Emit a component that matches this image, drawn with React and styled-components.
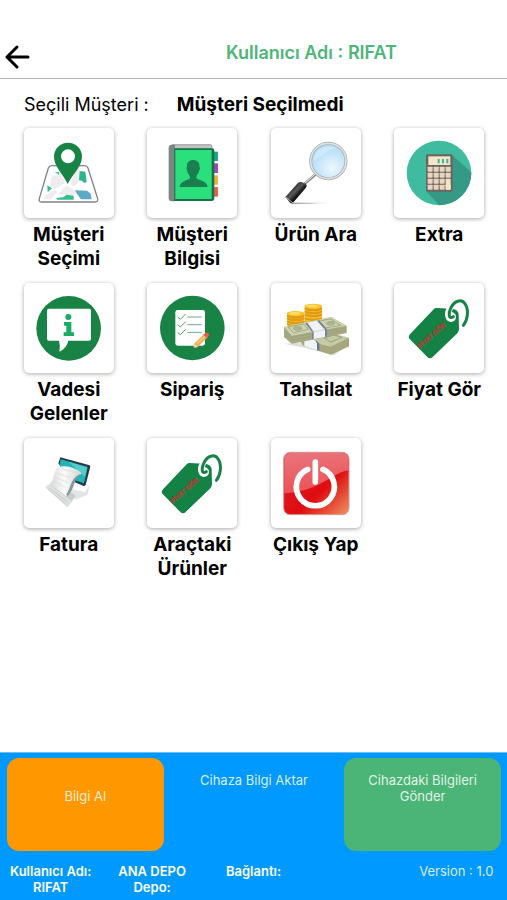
import styled, { createGlobalStyle } from "styled-components";

const GlobalStyle = createGlobalStyle`
  * {
    box-sizing: border-box;
  }
  body {
    margin: 0;
    background-color: white;
    color: black;
    font-family: Inter, "Liberation Sans", sans-serif;
  }
  button {
    border: none;
    padding: 0;
    background: none;
    color: inherit;
    font-family: inherit;
    cursor: pointer;
  }
`;

const Page = styled.div`
  min-height: 100vh;
  display: flex;
  flex-direction: column;
`;
const Header = styled.header`
  display: flex;
  align-items: center;
  padding-top: 36px;
  border-bottom: 1px solid #b4b4b4;
`;
const BackButton = styled.button`
  width: 116px;
  height: 42px;
  padding-left: 4px;
  display: flex;
  align-items: center;
`;
const Title = styled.h1`
  flex: 1;
  margin: 0;
  padding-bottom: 8px;
  text-align: center;
  color: #4db679;
  font-size: 18px;
  line-height: 24px;
  font-weight: 600;
`;
const Main = styled.main`
  flex: 1;
`;
const Customer = styled.p`
  display: flex;
  align-items: baseline;
  gap: 28px;
  margin: 0;
  padding: 14px 24px 11px;
  font-size: 18px;
  line-height: 24px;
  strong {
    font-size: 19px;
    font-weight: 700;
  }
`;
const Menu = styled.nav`
  display: grid;
  grid-template-columns: repeat(4, 1fr);
  row-gap: 12px;
  padding: 0 6px 0 7px;
`;
const MenuButton = styled.button`
  display: flex;
  flex-direction: column;
  align-items: center;
  gap: 5px;
  min-height: 143px;
`;
const Card = styled.span`
  display: block;
  width: 90px;
  height: 90px;
  border-radius: 5px;
  background-color: white;
  box-shadow: 0 1px 4px rgba(0, 0, 0, 0.34);
  svg {
    display: block;
    width: 100%;
    height: 100%;
  }
`;
const Label = styled.span`
  max-width: 100px;
  font-size: 19px;
  line-height: 24px;
  font-weight: 700;
`;
const Footer = styled.footer`
  background-color: #0099ff;
  color: white;
  border-top: 1px solid #66c2ff;
  padding-bottom: 5px;
`;
const Actions = styled.div`
  display: grid;
  grid-template-columns: repeat(3, 1fr);
  gap: 12px;
  padding: 5px 6px 12px 7px;
`;
const Action = styled.button`
  display: flex;
  justify-content: center;
  align-items: flex-start;
  min-height: 93px;
  padding: ${(props) => (props.$low ? "30px" : "14px")} 20px 0;
  border-radius: 12px;
  background-color: ${(props) => props.$color || "transparent"};
  color: rgba(255, 255, 255, 0.85);
  font-size: 13px;
  line-height: 16px;
`;
const Info = styled.div`
  display: grid;
  grid-template-columns: repeat(5, 1fr);
  text-align: center;
  font-size: 13px;
  line-height: 16px;
  font-weight: 600;
`;
const InfoItem = styled.span`
  padding: 0 6px;
`;
const Version = styled.span`
  grid-column: 5;
  font-weight: 400;
  color: rgba(255, 255, 255, 0.85);
`;

const BackIcon = () => (
  <svg width="26" height="26" viewBox="0 0 26 26" fill="none" aria-hidden="true">
    <path
      d="M24 13H3M13 3L3 13L13 23"
      stroke="black"
      strokeWidth="3"
      strokeLinecap="round"
      strokeLinejoin="round"
    />
  </svg>
);

const MapIcon = () => (
  <svg viewBox="27 22 270 270" aria-hidden="true">
    <path
      d="M110 135H208Q216 135 219 142L248 234Q250 244 240 244H80Q70 244 73 234L100 142Q103 135 110 135Z"
      fill="#fff"
      stroke="#818386"
      strokeWidth="4"
    />
    <path d="M110 168L138 160L150 188L120 205L104 196ZM128 222L155 194L188 216L172 224ZM184 142H193L192 184L176 198L166 190ZM92 222L120 208L128 214L108 236H86Z" fill="#efecef" />
    <path d="M194 151L211 153L215 185L206 186L201 180L192 179Z" fill="#2cb68c" />
    <path d="M97 194L111 203L98 215ZM120 154L133 155L132 163ZM124 232L144 230L155 222L176 225V237H126Z" fill="#36bd91" />
    <path d="M180 209L216 210L227 219L230 236H198L187 221Z" fill="#5aa9c7" />
    <path
      fillRule="evenodd"
      d="M158 190C146 162 117 138 117 108A42 42 0 1 1 201 108C201 138 171 162 158 190ZM159 86A21 21 0 1 0 159 128A21 21 0 1 0 159 86Z"
      fill="#178345"
    />
  </svg>
);

const ContactsIcon = () => (
  <svg viewBox="22 22 270 270" aria-hidden="true">
    <rect x="218" y="93" width="17" height="28" fill="#1ba58a" />
    <rect x="218" y="128" width="17" height="29" fill="#9c4cae" />
    <rect x="218" y="164" width="17" height="28" fill="#f0ae42" />
    <rect x="218" y="199" width="17" height="29" fill="#ef6047" />
    <path d="M98 72H212Q217 72 217 78V90H98Z" fill="#bfc3c2" stroke="#767c7b" strokeWidth="2" />
    <path d="M97 72H106V242H96Q87 242 87 232V82Q87 72 97 72Z" fill="#7d8582" />
    <path d="M104 83H218Q224 83 224 90V232Q224 241 216 241H104Z" fill="#16724b" />
    <path d="M107 88H216V235H107Z" fill="#2bdf7d" />
    <path
      d="M120 199C122 183 136 181 149 175Q153 172 149 164Q143 157 142 148Q138 143 142 137C139 112 182 112 179 137Q184 143 179 148Q178 157 171 164Q168 172 173 175C187 181 202 183 204 199Z"
      fill="#197f4e"
    />
  </svg>
);

const SearchIcon = () => (
  <svg viewBox="32 22 270 270" aria-hidden="true">
    <defs>
      <radialGradient id="lens" cx="60%" cy="70%" r="75%">
        <stop offset="0" stopColor="#edf8ff" />
        <stop offset="1" stopColor="#a5d5f4" />
      </radialGradient>
      <linearGradient id="handle" x1="0" y1="0" x2="1" y2="1">
        <stop offset="0.25" stopColor="#222" />
        <stop offset="0.45" stopColor="#5a5a5a" />
        <stop offset="0.6" stopColor="#151515" />
      </linearGradient>
      <linearGradient id="ground">
        <stop offset="0" stopColor="#777" />
        <stop offset="1" stopColor="#fff" />
      </linearGradient>
    </defs>
    <path d="M92 246L220 246L150 249H94Z" fill="url(#ground)" />
    <path d="M132 190L168 159" stroke="#858585" strokeWidth="8" />
    <path d="M133 188L167 158" stroke="#eee" strokeWidth="3" />
    <path d="M75 229L112 188Q116 183 124 184L136 189Q142 194 136 202L97 248L89 246Z" fill="url(#handle)" />
    <path d="M76 229L98 247" stroke="#aaa" strokeWidth="3" />
    <circle cx="204" cy="121" r="53" fill="url(#lens)" stroke="#a4aaab" strokeWidth="9" />
    <circle cx="204" cy="121" r="53" fill="none" stroke="#dde1e1" strokeWidth="5" />
    <path d="M160 119A44 44 0 0 1 231 86Q214 82 195 97Q176 111 160 119Z" fill="#fff" opacity="0.3" />
  </svg>
);

const keys = [0, 1, 2, 3].flatMap((row) => [0, 1, 2, 3].map((col) => ({ row, col })));

const CalculatorIcon = () => (
  <svg viewBox="27 22 270 270" aria-hidden="true">
    <defs>
      <clipPath id="disc">
        <circle cx="162" cy="157" r="97" />
      </clipPath>
    </defs>
    <circle cx="162" cy="157" r="97" fill="#3fbba0" />
    <path d="M202 104L280 174V270H178L124 212Z" fill="#369985" clipPath="url(#disc)" />
    <rect x="123" y="101" width="80" height="112" rx="4" fill="#6b6464" />
    <rect x="130" y="107" width="66" height="26" fill="#f6e6c6" />
    <path d="M161 115V128M174 115V128M187 115V128" stroke="#3eb49a" strokeWidth="6" />
    {keys.map(({ row, col }) => (
      <rect
        key={`${row}-${col}`}
        x={128 + col * 18}
        y={138 + row * 18}
        width="15"
        height={col === 3 && row === 2 ? 33 : 15}
        rx="2"
        fill={col === 3 && row > 1 ? "#f6e4be" : "#e9d5bd"}
      />
    ))}
  </svg>
);

const InfoIcon = () => (
  <svg viewBox="27 22 270 270" aria-hidden="true">
    <circle cx="161" cy="158" r="97" fill="#188345" />
    <path d="M102 99H222Q228 99 228 105V189Q228 195 222 195H160Q155 218 133 228Q137 211 132 195H102Q96 195 96 189V105Q96 99 102 99Z" fill="#fff" />
    <circle cx="160" cy="124" r="9" fill="#19ac65" />
    <path d="M147 139H169V170H177V181H146V170H154V150H147Z" fill="#19ac65" />
  </svg>
);

const OrderIcon = () => (
  <svg viewBox="22 22 270 270" aria-hidden="true">
    <circle cx="158" cy="157" r="97" fill="#188345" />
    <rect x="107" y="103" width="89" height="107" rx="7" fill="#fff" />
    <path
      d="M114 124L122 131L138 115M114 147L122 154L138 138M114 170L122 177L138 161"
      fill="none"
      stroke="#4c9c70"
      strokeWidth="3"
    />
    <path d="M143 124H186M143 147H186M143 170H186" stroke="#69ac87" strokeWidth="3" />
    <path d="M160 217L163 204L194 174L205 184L174 214Z" fill="#edb35c" />
    <path d="M171 204L199 179" stroke="#f6cc80" strokeWidth="4" />
    <path d="M191 177L199 171Q205 170 208 175Q210 180 202 187Z" fill="#e9584d" />
    <path d="M160 217L163 204L174 214Z" fill="#f6dfba" />
    <path d="M160 217L161 211L166 215Z" fill="#51545a" />
  </svg>
);

const Coins = ({ x, tops }) =>
  tops.map((y) => (
    <g key={y}>
      <ellipse cx={x} cy={y + 6} rx="27" ry="9" fill="#e09a14" />
      <ellipse cx={x} cy={y} rx="27" ry="8" fill="#f8c52c" />
      <ellipse cx={x - 3} cy={y - 1} rx="16" ry="4" fill="#ffdf68" />
    </g>
  ));

const MoneyIcon = () => (
  <svg viewBox="32 22 270 270" aria-hidden="true">
    <path d="M72 204L132 216L220 239L264 210L190 196Z" fill="#deded9" />
    <Coins x={159} tops={[132, 121, 110, 101, 92]} />
    <Coins x={106} tops={[140, 131, 122, 114]} />
    <path d="M116 192L190 176L266 187V212L212 237L130 211Z" fill="#a6a77f" />
    <path d="M116 190L208 170L266 186L211 213Z" fill="#c6c9a6" />
    <path d="M190 187L221 178L245 185L211 199Z" fill="none" stroke="#9aa27e" strokeWidth="3" />
    <path d="M132 192L154 187L176 206V226L132 211Z" fill="#f1f4f5" />
    <path d="M165 193L177 203V226L170 224V204Z" fill="#657993" />
    <path d="M71 155L213 124L259 151V172L94 204L71 184Z" fill="#a6a983" />
    <path d="M71 153L213 124L259 150L94 180Z" fill="#ced1ad" />
    <path d="M83 154L130 145L144 161L100 171ZM176 136L211 130L241 149L196 157Z" fill="none" stroke="#a3ac87" strokeWidth="3" />
    <ellipse cx="112" cy="158" rx="14" ry="7" fill="#a8b38b" />
    <ellipse cx="211" cy="143" rx="13" ry="7" fill="#a8b38b" />
    <path d="M76 167L94 185L259 156M76 176L94 193L259 164" fill="none" stroke="#8c9270" />
    <path d="M135 143L171 135L194 161V184L155 191V169Z" fill="#eff3f6" />
    <path d="M135 143L141 141L160 168V191L155 191V169ZM170 135L176 134L200 161V183L194 184V162Z" fill="#70849b" />
    <path d="M155 169L194 162" stroke="#bdc5ce" strokeWidth="2" />
  </svg>
);

const TagIcon = () => (
  <svg viewBox="27 22 270 270" aria-hidden="true">
    <path
      d="M154 97L198 99Q221 99 221 119L222 160Q222 167 217 173L143 244Q135 252 127 244L74 190Q68 184 75 176L146 101Q149 97 154 97Z"
      fill="#148245"
    />
    <circle cx="198" cy="124" r="15" fill="#fff" />
    <path
      d="M205 124C189 137 184 115 195 98C208 76 232 68 243 86C252 104 249 133 235 149"
      fill="none"
      stroke="#fff"
      strokeWidth="18"
    />
    <path
      d="M205 123C190 133 190 112 197 98C207 76 230 67 241 86C252 104 248 133 235 149"
      fill="none"
      stroke="#178345"
      strokeWidth="9"
      strokeLinecap="round"
    />
    <text
      x="105"
      y="220"
      transform="rotate(-42 105 220)"
      fill="#b93a32"
      stroke="#b93a32"
      fontFamily="Liberation Sans"
      fontSize="20"
      fontWeight="700"
    >
      FİYAT GÖR
    </text>
  </svg>
);

const InvoiceIcon = () => (
  <svg viewBox="27 22 270 270" aria-hidden="true">
    <defs>
      <linearGradient id="paper">
        <stop offset="0" stopColor="#d7dad8" />
        <stop offset="0.45" stopColor="#fafafa" />
        <stop offset="1" stopColor="#ced5d4" />
      </linearGradient>
    </defs>
    <path d="M158 172L210 184L224 162L218 192L183 207Z" fill="#e4e5e9" />
    <path d="M136 80L224 104Q227 106 225 112L212 163Q209 167 204 165L165 149L130 98Z" fill="#263c44" />
    <path d="M137 86L218 109L207 158L166 144L134 103Z" fill="#24b4b8" />
    <path d="M160 93L216 110L210 138Z" fill="#55cccb" />
    <path d="M95 165L157 228L183 196L125 153Z" fill="#c9cecb" />
    <path d="M91 170L104 162L173 212L157 230Z" fill="#dfe1df" />
    <path d="M102 172L158 214M113 168L165 205M99 177L151 219" stroke="#b9c1be" strokeWidth="2" />
    <path d="M126 113C145 98 187 112 201 129C172 139 177 167 153 197C136 180 116 173 104 159C117 153 114 126 126 113Z" fill="url(#paper)" />
    <path d="M127 128L164 141M121 140L158 156M117 152L151 170M142 115L181 126" stroke="#d3d8d6" strokeWidth="2" />
    <path d="M201 129C176 137 181 173 157 197L154 191C170 169 166 137 201 129Z" fill="#87989a" />
  </svg>
);

const PowerIcon = () => (
  <svg viewBox="32 22 270 270" aria-hidden="true">
    <defs>
      <linearGradient id="red" x1="0" y1="0" x2="1" y2="1">
        <stop offset="0" stopColor="#d92231" />
        <stop offset="0.6" stopColor="#df0c10" />
        <stop offset="1" stopColor="#ee9460" />
      </linearGradient>
      <linearGradient id="shine" x1="0" y1="0" x2="0" y2="1">
        <stop offset="0" stopColor="#f1a2a9" stopOpacity="0.65" />
        <stop offset="1" stopColor="#f27576" stopOpacity="0.65" />
      </linearGradient>
    </defs>
    <rect x="70" y="65" width="196" height="187" rx="20" fill="url(#red)" stroke="#db9896" strokeWidth="3" />
    <path d="M90 67H246Q264 67 264 86V119C210 129 182 181 72 188V86Q72 67 90 67Z" fill="url(#shine)" />
    <path
      d="M142 116A57 57 0 1 0 188 116M165 94V154"
      fill="none"
      stroke="#fff"
      strokeWidth="17"
      strokeLinecap="round"
    />
  </svg>
);

const menuItems = [
  { label: "Müşteri Seçimi", Icon: MapIcon },
  { label: "Müşteri Bilgisi", Icon: ContactsIcon },
  { label: "Ürün Ara", Icon: SearchIcon },
  { label: "Extra", Icon: CalculatorIcon },
  { label: "Vadesi Gelenler", Icon: InfoIcon },
  { label: "Sipariş", Icon: OrderIcon },
  { label: "Tahsilat", Icon: MoneyIcon },
  { label: "Fiyat Gör", Icon: TagIcon },
  { label: "Fatura", Icon: InvoiceIcon },
  { label: "Araçtaki Ürünler", Icon: TagIcon },
  { label: "Çıkış Yap", Icon: PowerIcon },
];

function App() {
  return (
    <Page lang="tr">
      <GlobalStyle />
      <Header>
        <BackButton type="button" aria-label="Geri">
          <BackIcon />
        </BackButton>
        <Title>Kullanıcı Adı : RIFAT</Title>
      </Header>
      <Main>
        <Customer>
          <span>Seçili Müşteri :</span>
          <strong>Müşteri Seçilmedi</strong>
        </Customer>
        <Menu>
          {menuItems.map(({ label, Icon }) => (
            <MenuButton key={label} type="button">
              <Card>
                <Icon />
              </Card>
              <Label>{label}</Label>
            </MenuButton>
          ))}
        </Menu>
      </Main>
      <Footer>
        <Actions>
          <Action type="button" $color="#ff9800" $low>
            Bilgi Al
          </Action>
          <Action type="button">Cihaza Bilgi Aktar</Action>
          <Action type="button" $color="#4bb577">
            Cihazdaki Bilgileri Gönder
          </Action>
        </Actions>
        <Info>
          <InfoItem>Kullanıcı Adı: RIFAT</InfoItem>
          <InfoItem>ANA DEPO Depo:</InfoItem>
          <InfoItem>Bağlantı:</InfoItem>
          <Version>Version : 1.0</Version>
        </Info>
      </Footer>
    </Page>
  );
}

export default App;
